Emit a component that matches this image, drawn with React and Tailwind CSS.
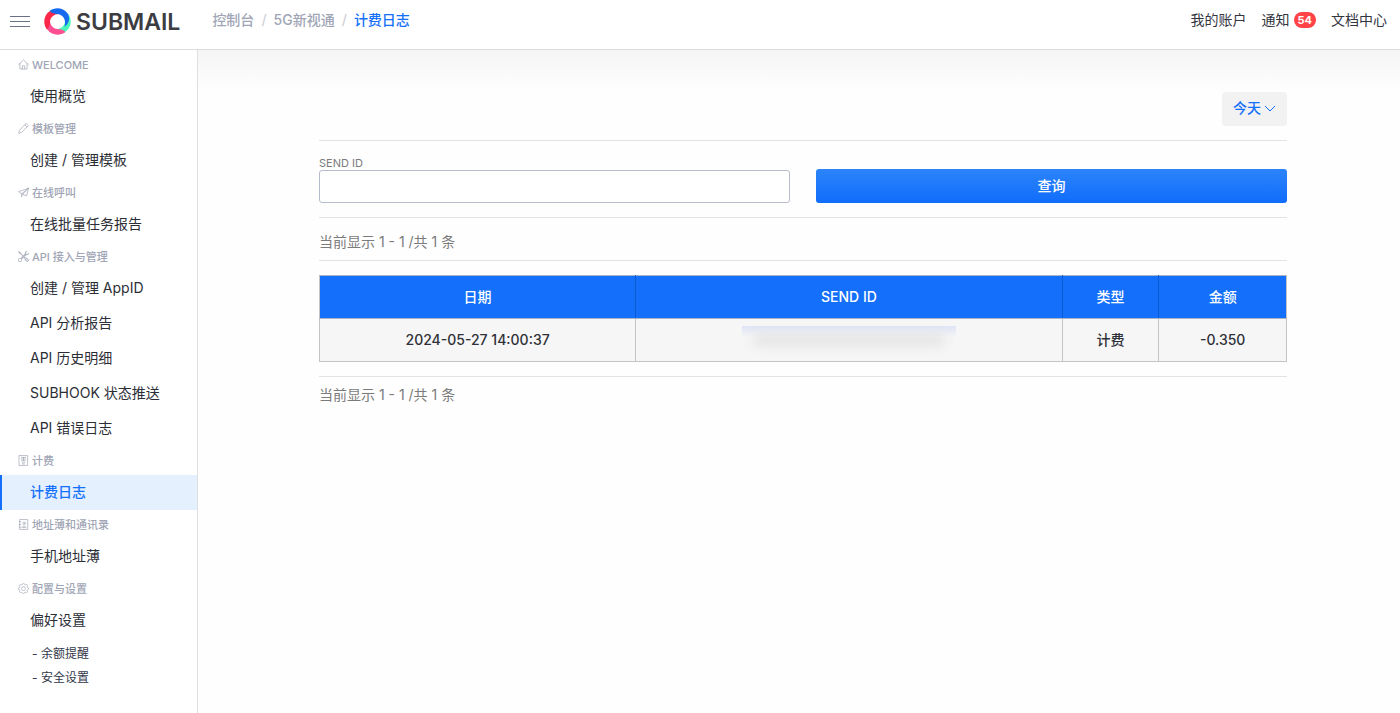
import React from "react";
import { BsTools, BsGear } from "react-icons/bs";

const Icon = ({ children }) => (
  <svg viewBox="0 0 16 16" className="h-[11px] w-[11px] shrink-0" fill="none" stroke="currentColor" strokeWidth="1" strokeLinecap="round" strokeLinejoin="round" aria-hidden="true">
    {children}
  </svg>
);

const icons = {
  house: (
    <Icon>
      <path d="M1 8 8 1.3 15 8M2.8 6.5V14.5H13.2V6.5M6.3 14.5V10H9.7V14.5" />
    </Icon>
  ),
  pencil: (
    <Icon>
      <path d="M12.2 1 15 3.8 5 13.8 1 15 2.2 11ZM10.2 3 13 5.8" />
    </Icon>
  ),
  send: (
    <Icon>
      <path d="M15.3 1.8 1 6.8 5 9.4ZM15.3 1.8 12.5 13 7.4 10.8ZM5 9.4V14.2L7.4 10.8" />
    </Icon>
  ),
  tools: <BsTools className="h-[11px] w-[11px] shrink-0 opacity-80" aria-hidden="true" />,
  bill: (
    <Icon>
      <path d="M2 .8H14V15.2H2ZM5 3.5H11M4.5 5.8H11.5M8 3.5V8.5M5.5 8.3H10.5M6 10 8 12 10 10M6.5 13H9.5" />
    </Icon>
  ),
  contacts: (
    <Icon>
      <path d="M3 .8H14.2V15.2H3ZM1.8 4H4M1.8 8H4M1.8 12H4M6 12C6.3 9.6 11.2 9.6 11.5 12Z" />
      <circle cx="8.8" cy="6.2" r="1.8" />
    </Icon>
  ),
  gear: <BsGear className="h-[11px] w-[11px] shrink-0 opacity-80" aria-hidden="true" />,
};

const sections = [
  { icon: "house", title: "WELCOME", items: ["使用概览"] },
  { icon: "pencil", title: "模板管理", items: ["创建 / 管理模板"] },
  { icon: "send", title: "在线呼叫", items: ["在线批量任务报告"] },
  { icon: "tools", title: "API 接入与管理", items: ["创建 / 管理 AppID", "API 分析报告", "API 历史明细", "SUBHOOK 状态推送", "API 错误日志"] },
  { icon: "bill", title: "计费", items: ["计费日志"] },
  { icon: "contacts", title: "地址薄和通讯录", items: ["手机地址薄"] },
  { icon: "gear", title: "配置与设置", items: ["偏好设置"] },
];

const blade = "M5.500 3C11-1.200 19-.6 23.500 5.200C26.200 9.500 25.500 15 20.500 19C22.600 12 19 6.500 13.500 6C10 5.800 7.500 5 5.500 3Z";

const Logo = () => (
  <svg viewBox="0 0 27 27" className="h-[27px] w-[27px]" aria-hidden="true">
    <path fill="#4af7b8" d={blade} transform="rotate(90 13.5 13.5)" />
    <path fill="#ff4f90" d={blade} transform="rotate(180 13.5 13.5)" />
    <path fill="#fb2748" d={blade} transform="rotate(270 13.5 13.5)" />
    <path fill="#1769f0" d={blade} />
  </svg>
);

const Header = () => (
  <header className="relative z-10 flex h-[50px] items-center justify-between border-b border-[#dcdcdc] bg-white pr-[13px] pb-[6px] pl-[10px]">
    <div className="flex items-center">
      <button type="button" aria-label="菜单" className="text-[#6b7185]">
        <svg viewBox="0 0 20 12" className="h-3 w-5" fill="currentColor" aria-hidden="true">
          <path d="M0 0H20V1H0ZM0 5H20V6H0ZM0 10H20V11H0Z" />
        </svg>
      </button>
      <a href="#" className="ml-[14px] flex items-center gap-[5px]">
        <Logo />
        <span className="text-[23px] leading-7 font-semibold text-[#3c3d42]">SUBMAIL</span>
      </a>
      <nav aria-label="breadcrumb" className="ml-8 flex items-center gap-[7px] pb-1 font-medium text-[#a0a5b5]">
        <a href="#">控制台</a>
        <span className="text-[#cfd2da]">/</span>
        <a href="#">5G新视通</a>
        <span className="text-[#cfd2da]">/</span>
        <a href="#" className="text-[#1470fb]">计费日志</a>
      </nav>
    </div>
    <nav className="flex items-center gap-[15px] pb-1 text-[#33353f]">
      <a href="#">我的账户</a>
      <a href="#" className="flex items-center gap-1">
        通知
        <span className="rounded-full bg-[#ff4346] px-1 text-[11px] leading-4 font-bold text-white">54</span>
      </a>
      <a href="#">文档中心</a>
    </nav>
  </header>
);

const Sidebar = () => (
  <aside className="w-[198px] shrink-0 border-r border-[#dfdfdf]">
    {sections.map((s) => (
      <section key={s.title}>
        <h2 className="flex h-[29px] items-center gap-[3px] pl-[18px] text-[11px] font-medium text-[#a0a5b5]">
          {icons[s.icon]}
          {s.title}
        </h2>
        {s.items.map((item) => (
          <a
            key={item}
            href="#"
            className={
              item === "计费日志"
                ? "flex h-[35px] items-center border-l-2 border-[#1470fb] bg-[#e5f0fe] pb-[2px] pl-7 font-medium text-[#1470fb]"
                : "flex h-[35px] items-center pb-[2px] pl-[30px] text-[#2c2e36]"
            }
          >
            {item}
          </a>
        ))}
      </section>
    ))}
    <div className="pt-1 pl-8 text-[12px] leading-6 text-[#33384a]">
      <a href="#" className="block">- 余额提醒</a>
      <a href="#" className="block">- 安全设置</a>
    </div>
  </aside>
);

const Summary = () => <p className="leading-5 text-[#7b7b7b]">当前显示 1 - 1 /共 1 条</p>;

const cell = "h-[43px] border border-[#c3c4c8] text-center";
const head =
  "h-[43px] border border-x-[#0d5bd0] border-y-[#a9b4c6] text-center font-medium first:border-l-[#c3c4c8] last:border-r-[#c3c4c8]";

export default function App() {
  return (
    <div className="flex min-h-screen flex-col bg-white font-['Inter','Noto_Sans_CJK_SC',sans-serif] text-[14px] leading-5">
      <Header />
      <div className="flex grow">
        <Sidebar />
        <main className="grow bg-[linear-gradient(#f5f5f5,#fefefe_42px)] pt-[42px] pr-[113px] pl-[121px]">
          <div className="flex justify-end">
            <button type="button" className="flex h-[34px] items-center gap-[3px] rounded bg-[#f2f2f2] px-[11px] pb-[2px] font-medium text-[#1470fb]">
              今天
              <svg viewBox="0 0 12 7" className="h-[7px] w-3" fill="none" stroke="currentColor" aria-hidden="true">
                <path d="M1 1 6 6 11 1" />
              </svg>
            </button>
          </div>
          <form className="mt-[14px] grid grid-cols-2 items-end gap-[26px] border-y border-[#e3e3e3] pt-4 pb-[14px]" onSubmit={(e) => e.preventDefault()}>
            <div>
              <label htmlFor="send-id" className="block text-[11px] leading-[13px] text-[#7b7b7b]">SEND ID</label>
              <input id="send-id" type="text" className="block h-[33px] w-full rounded-[3px] border border-[#b7bccb] bg-white px-2 outline-none" />
            </div>
            <button type="submit" className="h-[34px] rounded-[3px] bg-linear-to-b from-[#2b84fa] to-[#106cfb] font-medium text-white">查询</button>
          </form>
          <div className="border-b border-[#e3e3e3] pt-[14px] pb-2">
            <Summary />
          </div>
          <table className="mt-[14px] w-full table-fixed border-collapse">
            <colgroup>
              <col className="w-[32.7%]" />
              <col className="w-[44.1%]" />
              <col className="w-[10%]" />
              <col className="w-[13.2%]" />
            </colgroup>
            <thead className="bg-[#1470fb] text-white">
              <tr>
                <th className={head}>日期</th>
                <th className={head}>SEND ID</th>
                <th className={head}>类型</th>
                <th className={head}>金额</th>
              </tr>
            </thead>
            <tbody className="bg-[#f6f6f6] font-medium text-[#2f3138]">
              <tr>
                <td className={cell}>2024-05-27 14:00:37</td>
                <td className={cell}>
                  <div className="mx-auto flex h-7 w-[214px] items-center justify-center bg-linear-to-b from-[#dfe4f6] to-[#f6f6f6] to-40%">
                    <div className="h-[10px] w-[190px] bg-[#e0e0e0] blur-[6px]" />
                  </div>
                </td>
                <td className={cell}>计费</td>
                <td className={cell}>-0.350</td>
              </tr>
            </tbody>
          </table>
          <div className="mt-[14px] border-t border-[#e3e3e3] pt-2">
            <Summary />
          </div>
        </main>
      </div>
    </div>
  );
}
